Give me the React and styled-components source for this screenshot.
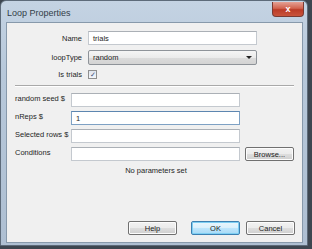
import React from 'react';
import styled, { createGlobalStyle } from 'styled-components';

const GlobalStyle = createGlobalStyle`
  html, body {
    margin: 0;
    padding: 0;
    background: #3d4650;
    width: 312px;
    height: 249px;
    overflow: hidden;
  }
`;

const Window = styled.div`
  width: 306px;
  height: 244px;
  display: flex;
  flex-direction: column;
  background: linear-gradient(180deg, #c4d3e3 0%, #b7c8da 30%, #aebfd2 100%);
  border: 1px solid #5d6b7a;
  border-radius: 6px 6px 0 0;
  font-family: 'Liberation Sans', Arial, sans-serif;
  font-size: 7.5px;
  color: #1e1e1e;
`;

const TitleBar = styled.div`
  height: 21px;
  display: flex;
  align-items: flex-start;
  justify-content: space-between;
  padding: 0 3px 0 6px;
`;

const Title = styled.span`
  font-size: 9px;
  color: #333d48;
  margin-top: 7px;
`;

const CloseButton = styled.div`
  width: 30px;
  height: 14px;
  margin-top: 1px;
  border: 1px solid #7a3a32;
  border-top: none;
  border-radius: 0 0 4px 4px;
  background: linear-gradient(180deg, #e4a195 0%, #d2634f 45%, #bb3b27 55%, #c9543c 100%);
  display: flex;
  align-items: center;
  justify-content: center;
  color: #fff;
  font-size: 9px;
  font-weight: bold;
`;

const Client = styled.div`
  flex: 1;
  margin: 0 4px 2px 5px;
  background: #f0f0f0;
  border: 1px solid #8799ab;
  display: flex;
  flex-direction: column;
  padding: 8px 7px 7px 7px;
`;

const TopGrid = styled.div`
  display: grid;
  grid-template-columns: 68px 169px;
  column-gap: 6px;
  row-gap: 5px;
  align-items: center;
`;

const RightLabel = styled.span`
  text-align: right;
  white-space: nowrap;
`;

const Field = styled.div`
  background: #fff;
  border: 1px solid ${p => (p.focus ? '#7ea1c4' : '#c4c9cf')};
  border-top-color: ${p => (p.focus ? '#5d86b0' : '#abb0b6')};
  display: flex;
  align-items: center;
  padding: 0 4px;
  box-sizing: border-box;
  height: 14px;
`;

const Select = styled.div`
  height: 15px;
  box-sizing: border-box;
  border: 1px solid #8e9399;
  border-radius: 2px;
  background: linear-gradient(180deg, #f5f5f5 0%, #ebebeb 50%, #dcdcdc 51%, #d3d3d3 100%);
  display: flex;
  align-items: center;
  justify-content: space-between;
  padding: 0 4px;
`;

const Arrow = styled.span`
  width: 0;
  height: 0;
  border-left: 3px solid transparent;
  border-right: 3px solid transparent;
  border-top: 3px solid #222;
`;

const Check = styled.div`
  width: 9px;
  height: 9px;
  box-sizing: border-box;
  border: 1px solid #8f8f8f;
  background: linear-gradient(180deg, #dfe5ee, #f4f6f9);
  display: flex;
  align-items: center;
  justify-content: center;
  font-size: 7px;
  color: #3b4e79;
  line-height: 1;
`;

const Separator = styled.div`
  height: 0;
  border-top: 1px solid #a9a9a9;
  border-bottom: 1px solid #fff;
  margin: 6px 1px 6px 1px;
`;

const BottomGrid = styled.div`
  display: grid;
  grid-template-columns: 52px 169px 49px;
  column-gap: 4px;
  row-gap: 4px;
  padding-left: 1px;
  align-items: start;
`;

const Label = styled.span`
  line-height: 12px;
  white-space: nowrap;
`;

const Button = styled.div`
  height: 14px;
  box-sizing: border-box;
  width: ${p => p.w || 49}px;
  border: 1px solid ${p => (p.primary ? '#3c7fb1' : '#707070')};
  border-radius: 2px;
  background: ${p =>
    p.primary
      ? 'linear-gradient(180deg, #eaf6fd 0%, #d9f0fc 50%, #bee6fd 51%, #a7d9f5 100%)'
      : 'linear-gradient(180deg, #f2f2f2 0%, #ebebeb 50%, #dddddd 51%, #cfcfcf 100%)'};
  box-shadow: inset 0 0 0 1px ${p => (p.primary ? '#7ecff3' : '#fcfcfc')};
  display: flex;
  align-items: center;
  justify-content: center;
  color: #222;
  margin-left: ${p => (p.gapLeft ? 1 : 0)}px;
`;

const BrowseButton = styled(Button)`
  margin-left: 1px;
`;

const Message = styled.div`
  text-align: center;
  margin-top: 5px;
  padding-left: 3px;
`;

const Footer = styled.div`
  margin-top: auto;
  display: flex;
  justify-content: flex-end;
  gap: 6px;
`;

const Spacer = styled.div`
  width: 2px;
`;

export default function App() {
  return (
    <>
      <GlobalStyle />
      <Window>
        <TitleBar>
          <Title>Loop Properties</Title>
          <CloseButton>x</CloseButton>
        </TitleBar>
        <Client>
          <TopGrid>
            <RightLabel>Name</RightLabel>
            <Field>trials</Field>
            <RightLabel>loopType</RightLabel>
            <Select>
              <span>random</span>
              <Arrow />
            </Select>
            <RightLabel>Is trials</RightLabel>
            <Check>✓</Check>
          </TopGrid>
          <Separator />
          <BottomGrid>
            <Label>random seed $</Label>
            <Field />
            <span />
            <Label>nReps $</Label>
            <Field focus>1</Field>
            <span />
            <Label>Selected rows $</Label>
            <Field />
            <span />
            <Label>Conditions</Label>
            <Field />
            <BrowseButton>Browse...</BrowseButton>
          </BottomGrid>
          <Message>No parameters set</Message>
          <Footer>
            <Button>Help</Button>
            <Spacer />
            <Button primary>OK</Button>
            <Button>Cancel</Button>
          </Footer>
        </Client>
      </Window>
    </>
  );
}
